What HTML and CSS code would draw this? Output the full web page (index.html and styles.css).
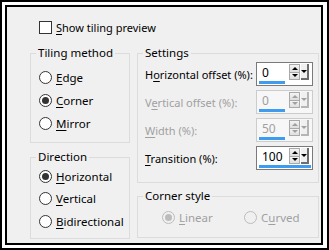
FILE: index.html
```html
<!DOCTYPE html>
<html>
<head>
<meta charset="utf-8">
<link rel="stylesheet" href="styles.css">
</head>
<body>
<div class="frame">
  <div class="dialog">
    <div class="check-row">
      <span class="checkbox"></span>
      <span class="label-text"><u>S</u>how tiling preview</span>
    </div>
    <div class="columns">
      <div class="col left-col">
        <fieldset class="group tiling">
          <legend>Tiling method</legend>
          <div class="radio-row"><span class="radio"></span><span><u>E</u>dge</span></div>
          <div class="radio-row"><span class="radio checked"></span><span><u>C</u>orner</span></div>
          <div class="radio-row"><span class="radio"></span><span><u>M</u>irror</span></div>
        </fieldset>
        <fieldset class="group direction">
          <legend>Direction</legend>
          <div class="radio-row"><span class="radio checked"></span><span><u>H</u>orizontal</span></div>
          <div class="radio-row"><span class="radio"></span><span><u>V</u>ertical</span></div>
          <div class="radio-row"><span class="radio"></span><span><u>B</u>idirectional</span></div>
        </fieldset>
      </div>
      <div class="col right-col">
        <fieldset class="group settings">
          <legend>Settings</legend>
          <div class="field-row">
            <span class="field-label">H<u>o</u>rizontal offset (%):</span>
            <div class="spinbox">
              <span class="value">0</span>
              <span class="bar" style="width:26px"></span>
              <span class="spin"><span class="spin-up"><i class="tri-up"></i></span><span class="spin-down"><i class="tri-down"></i></span></span>
              <span class="drop"><i class="tri-down"></i></span>
            </div>
          </div>
          <div class="field-row disabled">
            <span class="field-label">V<u>e</u>rtical offset (%):</span>
            <div class="spinbox">
              <span class="value">0</span>
              <span class="bar" style="width:26px"></span>
              <span class="spin"><span class="spin-up"><i class="tri-up"></i></span><span class="spin-down"><i class="tri-down"></i></span></span>
              <span class="drop"><i class="tri-down"></i></span>
            </div>
          </div>
          <div class="field-row disabled">
            <span class="field-label"><u>W</u>idth (%):</span>
            <div class="spinbox">
              <span class="value">50</span>
              <span class="bar" style="width:26px"></span>
              <span class="spin"><span class="spin-up"><i class="tri-up"></i></span><span class="spin-down"><i class="tri-down"></i></span></span>
              <span class="drop"><i class="tri-down"></i></span>
            </div>
          </div>
          <div class="field-row last">
            <span class="field-label"><u>T</u>ransition (%):</span>
            <div class="spinbox">
              <span class="value">100</span>
              <span class="bar" style="width:52px"></span>
              <span class="spin"><span class="spin-up"><i class="tri-up"></i></span><span class="spin-down"><i class="tri-down"></i></span></span>
              <span class="drop"><i class="tri-down"></i></span>
            </div>
          </div>
        </fieldset>
        <fieldset class="group corner">
          <legend>Corner style</legend>
          <div class="corner-row">
            <div class="radio-row disabled linear"><span class="radio checked"></span><span><u>L</u>inear</span></div>
            <div class="radio-row disabled"><span class="radio"></span><span>C<u>u</u>rved</span></div>
          </div>
        </fieldset>
      </div>
    </div>
  </div>
</div>
</body>
</html>
```
FILE: styles.css
```css
html, body {
  margin: 0;
  padding: 0;
  background: #fff;
}
.frame {
  width: 329px;
  height: 250px;
  box-sizing: border-box;
  border: 2px solid #000;
  padding: 3px 4px 3px 3px;
  background: #fff;
  overflow: hidden;
}
.dialog {
  height: 100%;
  box-sizing: border-box;
  border: 2px solid #000;
  background: #f0f0f0;
  font-family: "Noto Sans", "Open Sans", sans-serif;
  font-size: 11px;
  color: #000;
  padding: 14px 0 0 23px;
  overflow: hidden;
}
u { text-decoration: underline; text-underline-offset: 2px; }
.check-row {
  display: flex;
  align-items: center;
  height: 13px;
  margin-left: 9px;
  gap: 4px;
}
.checkbox {
  width: 13px;
  height: 13px;
  box-sizing: border-box;
  border: 1px solid #333;
  background: #fff;
}
.columns {
  display: flex;
  gap: 7px;
  margin-top: 11px;
}
.col {
  display: flex;
  flex-direction: column;
}
.left-col { width: 100px; gap: 6px; }
.right-col { width: 182px; gap: 5px; }
.group {
  margin: 0;
  border: 1px solid #dcdcdc;
  padding: 0;
  min-width: 0;
}
.group legend {
  padding: 0 2px;
  margin-left: 5px;
  line-height: 16px;
  font-size: 11.5px;
}
.tiling { height: 98px; padding-top: 5px; box-sizing: border-box; }
.direction { height: 90px; box-sizing: border-box; padding-top: 0; }
.radio-row {
  display: flex;
  align-items: center;
  height: 23px;
  gap: 4px;
  padding-left: 8px;
  white-space: nowrap;
  font-size: 11.5px;
}
.direction .radio-row { height: 22.5px; }
.radio {
  width: 13px;
  height: 13px;
  box-sizing: border-box;
  border: 1px solid #333;
  border-radius: 50%;
  background: #fff;
  display: flex;
  align-items: center;
  justify-content: center;
  flex: none;
}
.radio.checked::after {
  content: "";
  width: 7px;
  height: 7px;
  border-radius: 50%;
  background: #333;
}
.radio-row.disabled { color: #a0a0a0; }
.radio-row.disabled .radio { border-color: #bcbcbc; background: #f0f0f0; }
.radio-row.disabled .radio.checked::after { background: #bcbcbc; }

.settings { height: 138px; box-sizing: border-box; padding: 1px 0 0 0; }
.field-row {
  display: flex;
  align-items: center;
  justify-content: space-between;
  padding: 0 5px 0 7px;
  margin-bottom: 4px;
  white-space: nowrap;
}
.field-row.last { margin-top: 1px; }
.field-row.disabled { color: #a0a0a0; }
.spinbox {
  position: relative;
  width: 57px;
  height: 24px;
  box-sizing: border-box;
  border: 1px solid #7a7a7a;
  background: #fff;
}
.field-row.disabled .spinbox { border-color: #cccccc; background: #f7f7f7; }
.value {
  position: absolute;
  left: 5px;
  top: 2px;
  line-height: 16px;
  font-size: 12px;
}
.bar {
  position: absolute;
  left: 2px;
  top: 18px;
  height: 3px;
  background: #3d9cf0;
}
.spin {
  position: absolute;
  left: 32px;
  top: 1px;
  width: 11px;
  height: 16px;
  display: flex;
  flex-direction: column;
}
.spin-up, .spin-down {
  flex: 1;
  box-sizing: border-box;
  border: 1px solid #a9a9a9;
  background: linear-gradient(#f4f4f4, #dedede);
  display: flex;
  align-items: center;
  justify-content: center;
}
.spin-down { border-top: none; }
.drop {
  position: absolute;
  left: 44px;
  top: 1px;
  width: 8px;
  height: 16px;
  box-sizing: border-box;
  border-right: 2px solid #6d6d6d;
  border-bottom: 2px solid #6d6d6d;
  background: #f0f0f0;
  display: flex;
  align-items: center;
  justify-content: center;
}
.tri-up, .tri-down {
  width: 0;
  height: 0;
  border-left: 3px solid transparent;
  border-right: 3px solid transparent;
}
.tri-up { border-bottom: 3px solid #000; }
.tri-down { border-top: 3px solid #000; }
.field-row.disabled .tri-up { border-bottom-color: #a0a0a0; }
.field-row.disabled .tri-down { border-top-color: #a0a0a0; }
.field-row.disabled .drop { border-color: #b5b5b5; }

.corner { height: 50px; box-sizing: border-box; padding-top: 2px; }
.corner-row { display: flex; }
.corner-row .radio-row { height: 22px; padding-left: 0; }
.corner-row .linear { width: 82px; padding-left: 24px; }
```
